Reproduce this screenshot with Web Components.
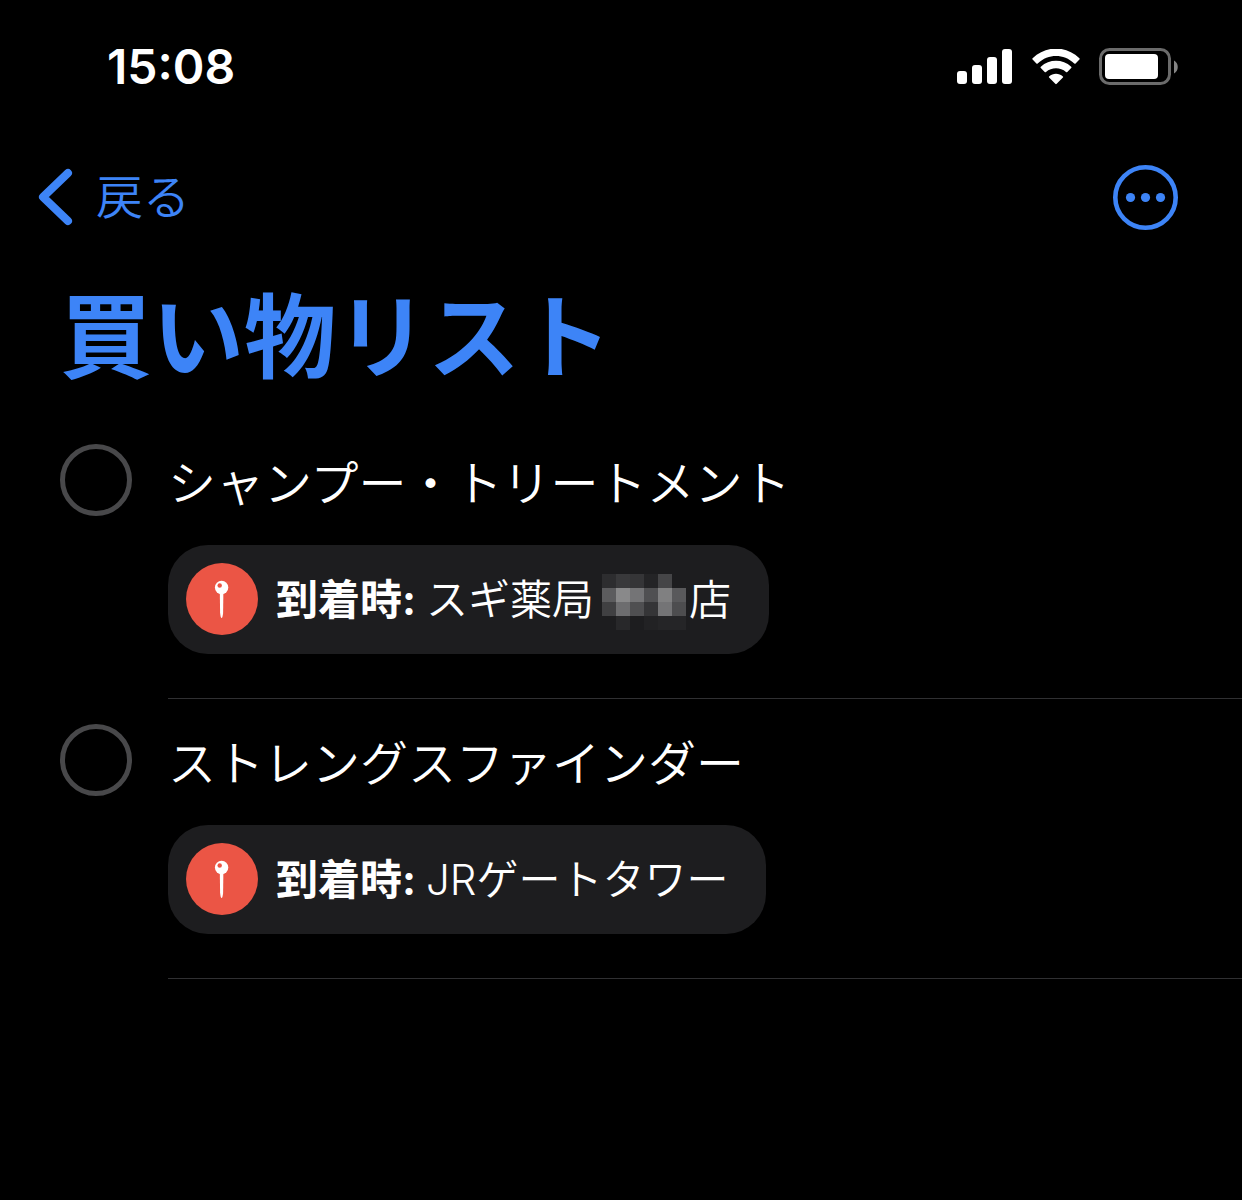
<!DOCTYPE html>
<html lang="ja">
<head>
<meta charset="utf-8">
<meta name="viewport" content="width=device-width, initial-scale=1">
<title>買い物リスト</title>
<style>
html { background: #000; }
body { margin: 0; min-height: 100vh; background: #000; color: #fff; font-family: Inter, "Noto Sans CJK JP", sans-serif; font-weight: 350; --accent: #3d84f7; --chip: #1d1d1f; --pin: #eb5545; --line: #303032; --ring: #48484a; }
</style>
</head>
<body>
<reminders-screen></reminders-screen>
<script>
function define(name, html, setup) {
  customElements.define(name, class extends HTMLElement {
    constructor() {
      super();
      const template = document.createElement('template');
      template.innerHTML = html;
      this.attachShadow({ mode: 'open' }).append(template.content.cloneNode(true));
      if (setup) setup(this.shadowRoot, this);
    }
  });
}

define('status-bar', `
<style>
:host { display: flex; align-items: center; justify-content: space-between; height: 132px; padding: 0 63px 0 107px; box-sizing: border-box; }
time { padding-top: 2px; font-size: 48px; line-height: 60px; font-weight: 600; }
.icons { display: flex; align-items: flex-end; gap: 19px; }
svg { display: block; }
</style>
<time>15:08</time>
<div class="icons">
<svg width="56" height="36" viewBox="0 0 56 36" fill="#fff" role="img" aria-label="signal"><rect y="22" width="10" height="13" rx="3"/><rect x="15" y="16" width="10" height="19" rx="3"/><rect x="30" y="8" width="10" height="27" rx="3"/><rect x="45" width="10" height="35" rx="3"/></svg>
<svg width="48" height="36" viewBox="0 0 48 36" fill="#fff" role="img" aria-label="wifi"><path d="M.6 9.2C14-3.7 34-3.7 47.400 9.200Q48 9.900 47.400 10.600L43.600 14.400Q43 15 42.300 14.400C31.500 4.600 16.500 4.600 5.700 14.400Q5 15 4.400 14.400L.6 10.600Q0 9.900.6 9.200Z"/><path d="M8.800 17.700C17.300 9.900 30.700 9.900 39.200 17.700Q39.900 18.400 39.200 19.100L35.300 22.900Q34.700 23.500 34 22.900C28.400 18 19.600 18 14 22.900Q13.300 23.500 12.700 22.900L8.800 19.100Q8.100 18.400 8.800 17.700Z"/><path d="M17.100 27.400C20.900 24 27.100 24 30.900 27.400Q31.500 28 30.900 28.600L24.700 34.800Q24 35.500 23.300 34.800L17.100 28.600Q16.500 28 17.100 27.400Z"/></svg>
<svg width="80" height="37" viewBox="0 0 80 37" role="img" aria-label="battery"><rect x="1.500" y="1.500" width="69" height="34" rx="9" fill="none" stroke="#6b6b6b" stroke-width="3"/><rect x="6" y="6" width="53" height="25" rx="4" fill="#fff"/><path d="M75 12.500C80 15 80 23 75 25.500Z" fill="#858585"/></svg>
</div>`);

define('nav-bar', `
<style>
:host { display: flex; align-items: center; justify-content: space-between; height: 130px; padding: 0 64px 0 38px; box-sizing: border-box; }
button { display: flex; align-items: center; gap: 22px; margin: 0; padding: 0; border: 0; background: none; color: var(--accent); font: inherit; font-size: 47px; line-height: 64px; cursor: pointer; }
svg { display: block; }
</style>
<button type="button"><svg width="36" height="58" viewBox="0 0 36 58" fill="none" stroke="currentColor" stroke-width="8" stroke-linecap="round" stroke-linejoin="round" aria-hidden="true"><path d="M30 5L5 29 30 53"/></svg><slot></slot></button>
<button type="button" aria-label="menu"><svg width="65" height="65" viewBox="0 0 65 65" fill="currentColor" aria-hidden="true"><circle cx="32.500" cy="32.500" r="30.200" fill="none" stroke="currentColor" stroke-width="4.600"/><circle cx="17.500" cy="32.500" r="4.600"/><circle cx="32.500" cy="32.500" r="4.600"/><circle cx="47.500" cy="32.500" r="4.600"/></svg></button>`);

define('location-chip', `
<style>
:host { display: flex; align-items: flex-start; gap: 18px; width: fit-content; min-height: 109px; box-sizing: border-box; padding: 18px 38px 18px 18px; border-radius: 40px; background: var(--chip); font-size: 42px; line-height: 72px; }
svg { display: block; flex: none; }
p { display: flex; align-items: center; gap: 10px; margin: 0; padding-top: 1px; white-space: nowrap; }
b { font-weight: 700; }
</style>
<svg width="72" height="72" viewBox="0 0 72 72" aria-hidden="true"><circle cx="36" cy="36" r="36" fill="var(--pin)"/><path d="M33.800 28H37.400L37.100 50Q36.600 55 35.600 55T34.100 50Z" fill="#fff"/><circle cx="35.600" cy="24.500" r="6.700" fill="#fff"/><circle cx="33.700" cy="22.500" r="2.200" fill="var(--pin)"/></svg>
<p><b>到着時:</b><slot></slot></p>`);

define('pixel-mask', `
<style>
:host { display: inline-block; width: 87px; height: 60px; margin-left: 8px; vertical-align: middle; }
svg { display: block; }
</style>
<svg width="84" height="56" viewBox="0 0 84 56" shape-rendering="crispEdges" aria-hidden="true"></svg>`, root => {
  const rows = [
    ['#2d2d2f', '#39393b', '#353537', '#242426', '#454547', '#1d1d1f'],
    ['#5c5c5e', '#89898a', '#747476', '#505052', '#808081', '#59595b'],
    ['#404042', '#6d6d6f', '#4f4f51', '#353537', '#747476', '#4d4d4f'],
    ['#1d1d1f', '#28282a', '#1d1d1f', '#222224', '#252527', '#252527']
  ];
  root.querySelector('svg').innerHTML = rows.map((row, y) => row.map((color, x) =>
    `<rect x="${x * 14}" y="${y * 14}" width="14" height="14" fill="${color}"/>`).join('')).join('');
});

define('reminder-item', `
<style>
:host { display: grid; grid-template-columns: 72px 1fr; column-gap: 36px; padding-left: 60px; }
input { appearance: none; width: 72px; height: 72px; margin: 25px 0 0; border: 5px solid var(--ring); border-radius: 50%; box-sizing: border-box; cursor: pointer; }
.body { display: flex; flex-direction: column; gap: 21px; padding: 25px 0 44px; border-bottom: 1px solid var(--line); }
label { font-size: 48px; line-height: 80px; }
</style>
<input id="done" type="checkbox">
<div class="body"><label for="done"><slot></slot></label><location-chip><slot name="place"></slot></location-chip></div>`);

define('reminders-screen', `
<style>
:host { display: block; }
h1 { margin: 0; padding: 0 60px; color: var(--accent); font-size: 92px; line-height: 152px; font-weight: 700; }
main { display: flex; flex-direction: column; gap: 5px; }
</style>
<status-bar></status-bar>
<nav-bar>戻る</nav-bar>
<main>
<h1>買い物リスト</h1>
<section>
<reminder-item>シャンプー・トリートメント<span slot="place">スギ薬局<pixel-mask></pixel-mask>店</span></reminder-item>
<reminder-item>ストレングスファインダー<span slot="place">JRゲートタワー</span></reminder-item>
</section>
</main>`);
</script>
</body>
</html>
